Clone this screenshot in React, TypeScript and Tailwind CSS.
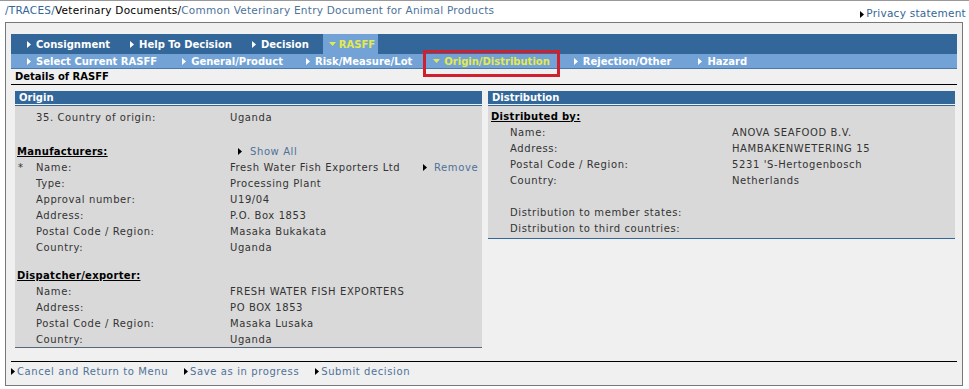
import React from 'react';

function Tri({ color = '#fff', down = false }: { color?: string; down?: boolean }) {
  return down ? (
    <svg width="7" height="4" viewBox="0 0 7 4" className="shrink-0">
      <path d="M0 0h7L3.5 4z" fill={color} />
    </svg>
  ) : (
    <svg width="4" height="7" viewBox="0 0 4 7" className="shrink-0">
      <path d="M0 0l4 3.5L0 7z" fill={color} />
    </svg>
  );
}

type Tab = { label: string; active?: boolean; ring?: boolean; ml: number };

const topTabs: Tab[] = [
  { label: 'Consignment', ml: 16 },
  { label: 'Help To Decision', ml: 20 },
  { label: 'Decision', ml: 20 },
  { label: 'RASFF', active: true, ml: 14 },
];

const subTabs: Tab[] = [
  { label: 'Select Current RASFF', ml: 16 },
  { label: 'General/Product', ml: 25 },
  { label: 'Risk/Measure/Lot', ml: 23 },
  { label: 'Origin/Distribution', active: true, ring: true, ml: 21 },
  { label: 'Rejection/Other', ml: 24 },
  { label: 'Hazard', ml: 27 },
];

function Row({ label, value, star, extra }: { label: string; value?: React.ReactNode; star?: boolean; extra?: React.ReactNode }) {
  return (
    <div className="flex h-[16px] items-center">
      <span className="w-[21px] pl-[3px]">{star ? '*' : ''}</span>
      <span className="w-[194px]">{label}</span>
      <span className="w-[193px]">{value}</span>
      {extra}
    </div>
  );
}

function DistRow({ label, value }: { label: string; value?: string }) {
  return (
    <div className="flex h-[16px] items-center">
      <span className="w-[22px]" />
      <span className="w-[222px]">{label}</span>
      <span>{value}</span>
    </div>
  );
}

function Link({ children }: { children: React.ReactNode }) {
  return (
    <span className="flex items-center gap-[2px] text-[#4f7199]">
      <Tri color="#000" />
      {children}
    </span>
  );
}

function PanelHead({ title }: { title: string }) {
  return (
    <div>
      <div className="h-[13px] bg-[#336699] pl-[4px] text-[10px] leading-[13px] font-bold text-white">{title}</div>
      <div className="h-px bg-[#f0f0f0]" />
      <div className="h-px bg-[#336699]" />
    </div>
  );
}

export default function App() {
  return (
    <div className="relative h-[389px] w-[969px] overflow-hidden border-t border-[#999] bg-white font-['DejaVu_Sans',Verdana,sans-serif] text-[10px] text-[#333]">
      <div className="flex h-[21px] justify-between tracking-[0.25px]">
        <div className="pl-[5px] pt-[2px] text-[10.5px]">
          <span className="text-[#336699]">/TRACES/</span>
          <span className="text-black">Veterinary Documents/</span>
          <span className="text-[#4d7399]">Common Veterinary Entry Document for Animal Products</span>
        </div>
        <div className="flex items-center gap-[2px] self-end pr-[3px] text-[10.5px] text-[#336699]">
          <Tri color="#000" />
          Privacy statement
        </div>
      </div>

      <div className="ml-[5px] h-[364px] w-[958px] border border-[#777] bg-[#f0f0f0] px-[5px] pt-[11px]">
        <div className="flex h-[20px] bg-[#336699] text-[10px] font-bold text-white">
          {topTabs.map((t) => (
            <div
              key={t.label}
              style={{ marginLeft: t.ml }}
              className={`flex items-center ${t.active ? 'gap-[3px] bg-[#73a3d6] pl-[6px] pr-[3px] text-[#e4ea4c]' : 'gap-[5px]'}`}
            >
              <Tri color={t.active ? '#e4ea4c' : '#fff'} down={t.active} />
              {t.label}
            </div>
          ))}
        </div>
        <div className="flex h-[15px] border-b border-[#4a78aa] bg-[#73a3d6] text-[10px] font-bold text-white">
          {subTabs.map((t) => (
            <div
              key={t.label}
              style={{ marginLeft: t.ml }}
              className={`relative flex items-center ${t.active ? 'gap-[4px] text-[#e4ea4c]' : 'gap-[5px]'}`}
            >
              <Tri color={t.active ? '#e4ea4c' : '#fff'} down={t.active} />
              {t.label}
              {t.ring && <span className="absolute -left-[10px] -top-[4px] h-[27px] w-[137px] border-[3px] border-[#cf2030]" />}
            </div>
          ))}
        </div>

        <div className="h-[16px] border-b border-black pl-[4px] text-[10px] font-bold leading-[16px] text-black">Details of RASFF</div>

        <div className="mt-[6px] flex gap-[6px] pl-[4px]">
          <div className="w-[467px]">
            <PanelHead title="Origin" />
            <div className="border-b border-[#55677a] bg-[#d9d9d9] pt-[3px] tracking-[0.6px]">
              <Row label="35. Country of origin:" value="Uganda" />
              <div className="h-[18px]" />
              <div className="flex h-[16px] items-center">
                <span className="w-[215px] pl-[2px] font-bold tracking-[0.3px] text-black underline">Manufacturers:</span>
                <span className="flex items-center gap-[8px] pl-[8px] text-[#4f7199]">
                  <Tri color="#000" />
                  Show All
                </span>
              </div>
              <Row
                star
                label="Name:"
                value="Fresh Water Fish Exporters Ltd"
                extra={
                  <span className="flex items-center gap-[7px] text-[#4f7199]">
                    <Tri color="#000" />
                    Remove
                  </span>
                }
              />
              <Row label="Type:" value="Processing Plant" />
              <Row label="Approval number:" value="U19/04" />
              <Row label="Address:" value="P.O. Box 1853" />
              <Row label="Postal Code / Region:" value="Masaka Bukakata" />
              <Row label="Country:" value="Uganda" />
              <div className="h-[12px]" />
              <div className="flex h-[16px] items-center pl-[2px] font-bold tracking-[0.3px] text-black underline">Dispatcher/exporter:</div>
              <Row label="Name:" value="FRESH WATER FISH EXPORTERS" />
              <Row label="Address:" value="PO BOX 1853" />
              <Row label="Postal Code / Region:" value="Masaka Lusaka" />
              <Row label="Country:" value="Uganda" />
            </div>
          </div>

          <div className="w-[467px] self-start">
            <PanelHead title="Distribution" />
            <div className="border-b border-[#336699] bg-[#d9d9d9] pb-[2px] pt-[2px] tracking-[0.6px]">
              <div className="flex h-[16px] items-center pl-[3px] font-bold tracking-[0.3px] text-black underline">Distributed by:</div>
              <DistRow label="Name:" value="ANOVA SEAFOOD B.V." />
              <DistRow label="Address:" value="HAMBAKENWETERING 15" />
              <DistRow label="Postal Code / Region:" value="5231 'S-Hertogenbosch" />
              <DistRow label="Country:" value="Netherlands" />
              <div className="h-[16px]" />
              <DistRow label="Distribution to member states:" />
              <DistRow label="Distribution to third countries:" />
            </div>
          </div>
        </div>

        <div className="mt-[13px] flex h-[20px] items-center gap-[16px] border-t border-black pl-[0px] tracking-[0.6px]">
          <Link>Cancel and Return to Menu</Link>
          <Link>Save as in progress</Link>
          <Link>Submit decision</Link>
        </div>
      </div>
    </div>
  );
}
